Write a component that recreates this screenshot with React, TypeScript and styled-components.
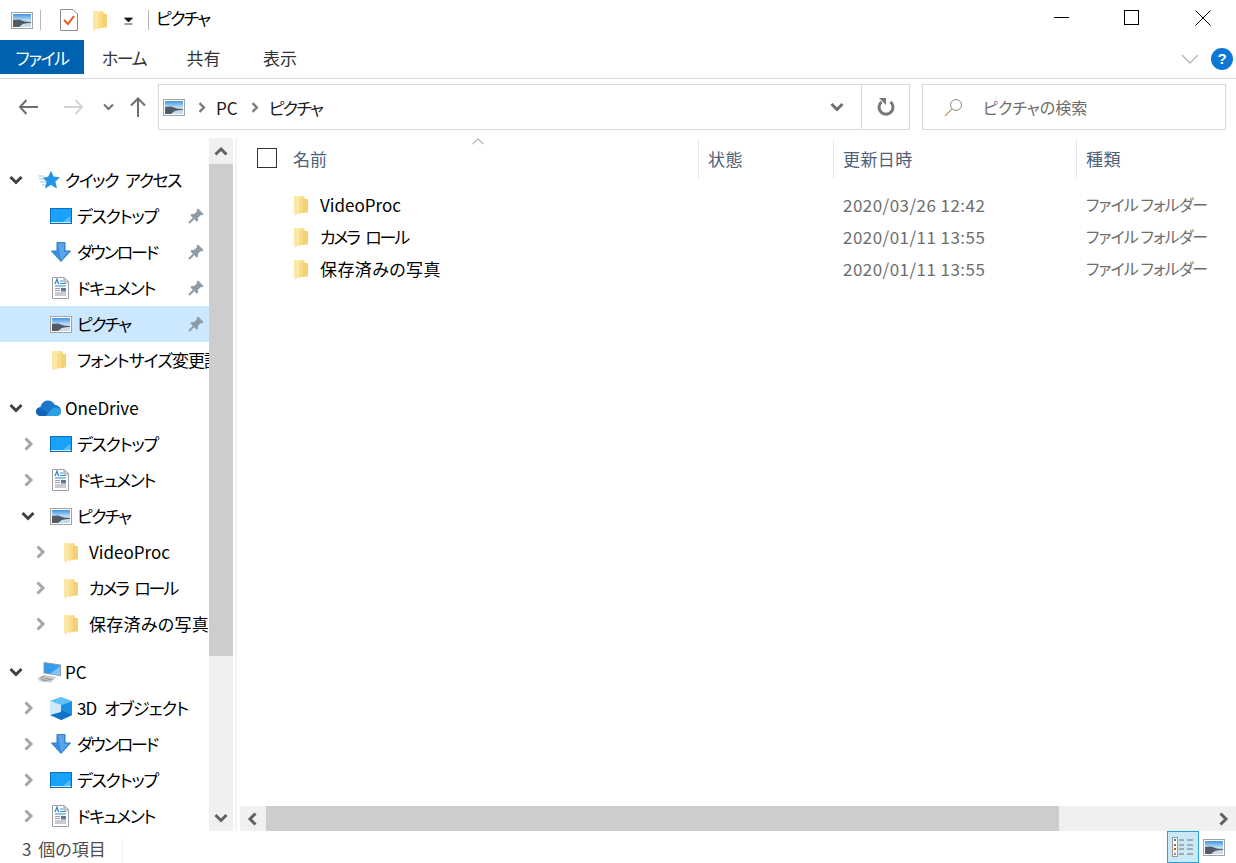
import React from 'react'
import styled, { createGlobalStyle } from 'styled-components'

const GlobalStyle = createGlobalStyle`
  html, body {
    margin: 0;
    padding: 0;
    background: #fff;
  }
  body {
    font-family: 'Noto Sans CJK JP', 'Noto Sans', sans-serif;
    font-size: 17px;
    font-feature-settings: 'palt';
    color: #000;
  }
`

const PictureIcon = ({ size = 22 }: { size?: number }) => (
  <svg width={size} height={(size * 17) / 22} viewBox="0 0 22 17">
    <defs>
      <linearGradient id="picSky" x1="0" y1="0" x2="0" y2="1">
        <stop offset="0" stopColor="#3f94e6" />
        <stop offset="0.55" stopColor="#cfe6f7" />
      </linearGradient>
    </defs>
    <rect x="0.5" y="0.5" width="21" height="16" fill="#fff" stroke="#a3a3a3" />
    <rect x="2" y="2" width="18" height="13" fill="url(#picSky)" />
    <path d="M2 8 L8 7.5 L14 9.5 L20 10 L20 11 L12 12 L8 15 L2 15Z" fill="#515c66" />
    <path d="M9 15 L12 12 L20 11 V15Z" fill="#c8dcea" />
  </svg>
)

const FolderIcon = () => (
  <svg width="17" height="21" viewBox="0 0 17 21">
    <path d="M1 1 H10 L11 4 H14 V17 H5 V1Z" fill="#f7d774" />
    <path d="M0 1 H9 V3 L12 5 V18 H5 L1 21 L0 18Z" fill="#fbe7a6" />
    <path d="M5 4 L9 1.5 V17 L5 19.5Z" fill="#f8dc88" />
    <path d="M9 4 H14 V17.5 H7 L9 16Z" fill="#f4d273" />
  </svg>
)

const DesktopIcon = () => (
  <svg width="22" height="16" viewBox="0 0 22 16">
    <rect x="0.5" y="0.5" width="21" height="15" fill="#18a2fb" stroke="#0a6fb8" />
    <path d="M13 14 L20 8 V14Z" fill="#5cbcf9" />
    <rect x="1" y="14" width="20" height="1" fill="#d6eefd" />
  </svg>
)

const DownloadIcon = () => (
  <svg width="20" height="20" viewBox="0 0 20 20">
    <path d="M6 0.5 H14 V9 H19.5 L10 19.5 L0.5 9 H6Z" fill="#3b8ee0" stroke="#2f7ecb" />
    <path d="M7 1 H13 V10 H17 L10 18Z" fill="#5aa5e8" />
  </svg>
)

const DocIcon = () => (
  <svg width="17" height="22" viewBox="0 0 17 22">
    <path d="M0.5 0.5 H12 L16.5 5 V21.5 H0.5Z" fill="#fff" stroke="#a0a0a0" />
    <path d="M12 0.5 V5 H16.5Z" fill="#e6e6e6" stroke="#a0a0a0" />
    <path d="M3 7 L5 2 L6.5 7" fill="none" stroke="#2b7fd0" strokeWidth="1.2" />
    <path d="M8 4 H11 M8 6.5 H14 M3 9 H14" stroke="#2b8fe0" />
    <path d="M3 11.5 H8 M3 13.5 H8 M3 16 H14 M3 18 H14" stroke="#9a9a9a" />
    <rect x="9" y="11" width="5" height="3.5" fill="#5a7a98" />
  </svg>
)

const PinIcon = () => (
  <svg width="16" height="16" viewBox="0 0 16 16">
    <path d="M10 0.5 L15.5 6 L14 7.5 L12.8 7 L10 9.8 L10 12.5 L8.8 13.7 L2.3 7.2 L3.5 6 L6.2 6 L9 3.2 L8.5 2Z" fill="#8f9ba4" />
    <path d="M5.5 10.5 L1 15" stroke="#8f9ba4" strokeWidth="2" />
  </svg>
)

const StarIcon = () => (
  <svg width="22" height="18" viewBox="0 0 22 18">
    <path d="M13 0.5 L15.5 6 L21.5 6.5 L17 10.5 L18.5 17 L13 13.5 L7.5 17 L9 10.5 L5 7 L10.5 6Z" fill="#1e96ec" stroke="#1b7fd0" strokeWidth="0.6" />
    <path d="M0 5 H6 M1 8 H7 M2 11 H8 M4 14 H8" stroke="#8fcdf5" />
  </svg>
)

const CloudIcon = () => (
  <svg width="25" height="16" viewBox="0 0 25 16">
    <path d="M5 16 C1.5 16 0 13.5 0 11.5 C0 9 2 7.3 4.3 7.2 C5.5 3 8.5 0.5 12 0.5 C15 0.5 17.5 2.2 18.8 5 C22 5 25 7.5 25 11 C25 14 23 16 20 16Z" fill="#1b78c9" />
    <path d="M5 16 C1.5 16 0 13.5 0 11.5 C0 9.5 1.5 8 3.5 7.5 L12 13 L16 16Z" fill="#0f65b8" />
    <path d="M10 16 L16 9 C18 7 25 7.5 25 11 C25 14 23 16 20 16Z" fill="#2aa0e6" />
  </svg>
)

const PcIcon = () => (
  <svg width="24" height="21" viewBox="0 0 24 21">
    <path d="M7 0.5 L23.5 3 V13.5 L7 11Z" fill="#2f9cf0" stroke="#8b9aa5" />
    <path d="M13 12 L23 4 V13Z" fill="#7cc5f7" />
    <path d="M0.5 16 L7.5 13 L19 15 L14 20.5 L3 19.5Z" fill="#c9cdd0" />
    <path d="M3 16 L8 14 M4 17.5 L12 16 M6 19 L15 17" stroke="#8e9499" />
  </svg>
)

const CubeIcon = () => (
  <svg width="22" height="23" viewBox="0 0 22 23">
    <path d="M11 0 L22 4 V18 L11 23 L0 18 V4Z" fill="#b6e2fa" />
    <path d="M11 8 L22 4 V18 L11 23Z" fill="#1b8ee6" />
    <path d="M11 0 L22 4 L11 8 L0 4Z" fill="#62c0f5" />
    <path d="M11 13 L22 18 L11 23 L0 18Z" fill="#1272c8" />
    <path d="M0 4 L11 8 V15 L0 18Z" fill="#cdebfb" />
  </svg>
)

const Chevron = ({ dir, color, size = 14 }: { dir: 'up' | 'down' | 'left' | 'right'; color: string; size?: number }) => {
  const paths = {
    up: 'M1.5 10.5 L7 5 L12.5 10.5',
    down: 'M1.5 4 L7 9.5 L12.5 4',
    left: 'M9.5 1.5 L4 7 L9.5 12.5',
    right: 'M4.5 1.5 L10 7 L4.5 12.5',
  }
  return (
    <svg width={size} height={size} viewBox="0 0 14 14">
      <path d={paths[dir]} fill="none" stroke={color} strokeWidth="3" />
    </svg>
  )
}

const Window = styled.div`
  width: 1236px;
  height: 863px;
  display: flex;
  flex-direction: column;
  overflow: hidden;
  background: #fff;
`

const TitleBar = styled.div`
  height: 40px;
  display: flex;
  align-items: center;
  flex: none;
`

const QuickTools = styled.div`
  display: flex;
  align-items: center;
  padding-left: 11px;
`

const ToolSep = styled.div<{ $before: number; $after: number }>`
  width: 1px;
  height: 20px;
  background: #b5b5b5;
  margin: 0 ${(p) => p.$after}px 0 ${(p) => p.$before}px;
`

const ToolSlot = styled.div<{ $w: number }>`
  width: ${(p) => p.$w}px;
  display: flex;
  justify-content: flex-start;
`

const WindowTitle = styled.div`
  font-size: 17px;
  letter-spacing: -1.7px;
  margin-left: 7px;
  position: relative;
  top: -3px;
`

const WindowButtons = styled.div`
  margin-left: auto;
  margin-right: -2px;
  display: flex;
  align-items: center;
`

const WindowButton = styled.div`
  width: 71px;
  height: 36px;
  display: flex;
  align-items: center;
  justify-content: center;
  position: relative;
  top: -2px;
`

const Ribbon = styled.div`
  height: 38px;
  flex: none;
  display: flex;
  align-items: flex-start;
  border-bottom: 1px solid #d9d9d9;
`

const RibbonTab = styled.div<{ $active?: boolean; $w: number; $track?: number }>`
  width: ${(p) => p.$w}px;
  height: 34px;
  line-height: 36px;
  font-size: 17px;
  letter-spacing: ${(p) => p.$track ?? 0}px;
  text-align: center;
  color: ${(p) => (p.$active ? '#fff' : '#333')};
  background: ${(p) => (p.$active ? '#0063b1' : 'transparent')};
`

const RibbonRight = styled.div`
  margin-left: auto;
  display: flex;
  align-items: center;
  gap: 12px;
  padding: 8px 3px 0 0;
`

const HelpBadge = styled.div`
  width: 22px;
  height: 22px;
  border-radius: 50%;
  background: #0a78d4;
  color: #fff;
  font-family: 'Liberation Sans', sans-serif;
  font-weight: 700;
  font-size: 15px;
  line-height: 22px;
  text-align: center;
`

const AddressRow = styled.div`
  height: 56px;
  flex: none;
  display: flex;
  align-items: flex-start;
  padding-top: 5px;
  box-sizing: border-box;
`

const NavButtons = styled.div`
  width: 158px;
  height: 46px;
  flex: none;
  display: flex;
  align-items: center;
  padding-left: 18px;
  box-sizing: border-box;
`

const NavBtn = styled.div<{ $w: number }>`
  width: ${(p) => p.$w}px;
  flex: none;
  display: flex;
  align-items: center;
`

const AddressBox = styled.div`
  width: 752px;
  height: 46px;
  box-sizing: border-box;
  border: 1px solid #d9d9d9;
  display: flex;
  align-items: center;
  padding-left: 4px;
  font-size: 17px;
  color: #1a1a1a;
`

const Crumb = styled.span`
  margin: 0 9px 0 11px;
  display: inline-flex;
`

const AddressLabel = styled.span<{ $track?: number }>`
  letter-spacing: ${(p) => p.$track ?? 0}px;
`

const AddressEnd = styled.div`
  margin-left: auto;
  display: flex;
  align-items: center;
  height: 100%;
`

const AddressDrop = styled.div`
  width: 46px;
  height: 100%;
  display: flex;
  align-items: center;
  justify-content: center;
  border-right: 1px solid #d9d9d9;
  box-sizing: border-box;
  padding-right: 3px;
`

const RefreshBtn = styled.div`
  width: 47px;
  display: flex;
  justify-content: center;
`

const SearchBox = styled.div`
  width: 304px;
  height: 46px;
  margin-left: 12px;
  box-sizing: border-box;
  border: 1px solid #d9d9d9;
  display: flex;
  align-items: center;
  gap: 20px;
  padding-left: 21px;
  font-size: 16px;
  color: #6d6d6d;
`

const Main = styled.div`
  flex: none;
  height: 696px;
  display: flex;
`

const NavColumn = styled.div`
  width: 209px;
  flex: none;
  overflow: hidden;
  padding-top: 27px;
  box-sizing: border-box;
`

const NavGroup = styled.div`
  margin-bottom: 12px;
`

const NavRow = styled.div<{ $level: number; $selected?: boolean }>`
  height: 36px;
  display: flex;
  align-items: center;
  padding-left: ${(p) => p.$level * 12}px;
  padding-right: 5px;
  overflow: hidden;
  background: ${(p) => (p.$selected ? '#cce8ff' : 'transparent')};
`

const Expander = styled.div`
  width: 32px;
  flex: none;
  display: flex;
  justify-content: center;
`

const NavIcon = styled.div`
  width: 33px;
  flex: none;
  display: flex;
  justify-content: center;
  align-items: center;
`

const NavLabel = styled.span<{ $track?: number }>`
  white-space: nowrap;
  flex: none;
  font-size: 17px;
  letter-spacing: ${(p) => p.$track ?? 0}px;
  word-spacing: 5px;
  position: relative;
  top: -1px;
`

const NavPin = styled.div`
  margin-left: auto;
  display: flex;
`

const VScroll = styled.div`
  width: 24px;
  flex: none;
  margin-top: 3px;
  display: flex;
  flex-direction: column;
  background: #f0f0f0;
`

const ScrollEnd = styled.div<{ $end?: boolean }>`
  height: 26px;
  flex: none;
  margin-top: ${(p) => (p.$end ? 'auto' : '0')};
  display: flex;
  align-items: center;
  justify-content: center;
`

const VThumb = styled.div`
  height: 492px;
  flex: none;
  background: #cdcdcd;
`

const Splitter = styled.div`
  width: 2px;
  flex: none;
  margin: 3px 0 0 2px;
  background: #f2f2f2;
`

const Content = styled.div`
  flex: 1;
  min-width: 0;
  display: flex;
  flex-direction: column;
  padding-left: 1px;
`

const Columns = `
  display: grid;
  grid-template-columns: 461px 135px 243px 157px;
`

const HeaderRow = styled.div`
  ${Columns}
  height: 38px;
  margin-top: 5px;
  margin-bottom: 11px;
  flex: none;
  position: relative;
`

const SortCaret = styled.div`
  position: absolute;
  left: 234px;
  top: -2px;
  display: flex;
`

const HeaderCell = styled.div<{ $last?: boolean }>`
  padding-left: 9px;
  border-right: ${(p) => (p.$last ? '0' : '1px solid #e5e5e5')};
  font-size: 17px;
  letter-spacing: 0.4px;
  line-height: 37px;
  color: #4c607a;
`

const NameHeader = styled(HeaderCell)`
  display: flex;
  align-items: flex-start;
  padding-left: 19px;
  gap: 16px;
  letter-spacing: 0;
`

const CheckBox = styled.div`
  width: 20px;
  height: 20px;
  box-sizing: border-box;
  border: 1px solid #333;
  margin-top: 8px;
  flex: none;
`

const FileList = styled.div`
  flex: 1;
  min-height: 0;
`

const FileRow = styled.div`
  ${Columns}
  height: 32px;
  align-items: center;
`

const NameCell = styled.div`
  display: flex;
  align-items: center;
  gap: 9px;
  padding-left: 56px;
  font-size: 17px;
`

const NameText = styled.span<{ $track?: number }>`
  letter-spacing: ${(p) => p.$track ?? 0}px;
  word-spacing: 5px;
  position: relative;
  top: -1px;
`

const DateCell = styled.div`
  padding-left: 9px;
  font-size: 17px;
  letter-spacing: 0.45px;
  color: #6d6d6d;
  white-space: nowrap;
  position: relative;
  top: -1px;
`

const TypeCell = styled.div`
  padding-left: 9px;
  font-size: 16px;
  letter-spacing: -0.9px;
  color: #6d6d6d;
  white-space: nowrap;
  position: relative;
  top: -1px;
`

const HScroll = styled.div`
  height: 25px;
  flex: none;
  margin-left: 2px;
  display: flex;
  background: #f0f0f0;
`

const HEnd = styled.div<{ $end?: boolean }>`
  width: 26px;
  flex: none;
  margin-left: ${(p) => (p.$end ? 'auto' : '0')};
  display: flex;
  align-items: center;
  justify-content: center;
`

const HThumb = styled.div`
  width: 793px;
  flex: none;
  background: #cdcdcd;
`

const StatusBar = styled.div`
  flex: 1;
  display: flex;
  align-items: center;
  font-size: 17px;
  color: #4d4d4d;
`

const StatusText = styled.div`
  padding-left: 22px;
  width: 100px;
  flex: none;
  white-space: nowrap;
  word-spacing: 3px;
  position: relative;
  top: 1px;
`

const StatusSep = styled.div`
  width: 1px;
  height: 24px;
  margin-top: 8px;
  background: #efefef;
`

const ViewToggles = styled.div`
  margin-left: auto;
  display: flex;
  align-items: center;
  padding-right: 11px;
  gap: 4px;
  height: 100%;
`

const DetailsToggle = styled.div`
  width: 32px;
  height: 100%;
  box-sizing: border-box;
  border: 1px solid #26a0da;
  background: #cbe8f6;
  display: flex;
  align-items: center;
  justify-content: center;
`

const nav = [
  {
    rows: [
      { level: 0, exp: 'open', icon: <StarIcon />, label: 'クイック アクセス', track: -1.5 },
      { level: 1, icon: <DesktopIcon />, label: 'デスクトップ', track: -1.3, pin: true },
      { level: 1, icon: <DownloadIcon />, label: 'ダウンロード', track: -2.1, pin: true },
      { level: 1, icon: <DocIcon />, label: 'ドキュメント', track: -1.5, pin: true },
      { level: 1, icon: <PictureIcon />, label: 'ピクチャ', track: -1.7, pin: true, selected: true },
      { level: 1, icon: <FolderIcon />, label: 'フォントサイズ変更記事', track: -1 },
    ],
  },
  {
    rows: [
      { level: 0, exp: 'open', icon: <CloudIcon />, label: 'OneDrive' },
      { level: 1, exp: 'closed', icon: <DesktopIcon />, label: 'デスクトップ', track: -1.3 },
      { level: 1, exp: 'closed', icon: <DocIcon />, label: 'ドキュメント', track: -1.5 },
      { level: 1, exp: 'open', icon: <PictureIcon />, label: 'ピクチャ', track: -1.7 },
      { level: 2, exp: 'closed', icon: <FolderIcon />, label: 'VideoProc' },
      { level: 2, exp: 'closed', icon: <FolderIcon />, label: 'カメラ ロール', track: -2.2 },
      { level: 2, exp: 'closed', icon: <FolderIcon />, label: '保存済みの写真', track: 0.3 },
    ],
  },
  {
    rows: [
      { level: 0, exp: 'open', icon: <PcIcon />, label: 'PC' },
      { level: 1, exp: 'closed', icon: <CubeIcon />, label: '3D オブジェクト', track: -0.9 },
      { level: 1, exp: 'closed', icon: <DownloadIcon />, label: 'ダウンロード', track: -2.1 },
      { level: 1, exp: 'closed', icon: <DesktopIcon />, label: 'デスクトップ', track: -1.3 },
      { level: 1, exp: 'closed', icon: <DocIcon />, label: 'ドキュメント', track: -1.5 },
    ],
  },
]

const files = [
  { name: 'VideoProc', date: '2020/03/26 12:42', track: 0 },
  { name: 'カメラ ロール', date: '2020/01/11 13:55', track: -2.2 },
  { name: '保存済みの写真', date: '2020/01/11 13:55', track: 0.4 },
]

export default function App() {
  return (
    <Window>
      <GlobalStyle />
      <TitleBar>
        <QuickTools>
          <PictureIcon />
          <ToolSep $before={7} $after={19} />
          <ToolSlot $w={33}>
            <svg width="18" height="22" viewBox="0 0 18 22">
              <path d="M0.5 0.5 H13 L17.5 5 V21.5 H0.5Z" fill="#fff" stroke="#8c8c8c" />
              <path d="M4 11 L8 15 L14 7" fill="none" stroke="#e8591c" strokeWidth="2" />
            </svg>
          </ToolSlot>
          <ToolSlot $w={30}>
            <FolderIcon />
          </ToolSlot>
          <svg width="11" height="10" viewBox="0 0 11 10">
            <path d="M1.5 3 H9.5 L5.5 7Z M1.5 9 H9.5" fill="#111" stroke="#111" strokeWidth="0.8" />
          </svg>
          <ToolSep $before={14} $after={0} />
          <WindowTitle>ピクチャ</WindowTitle>
        </QuickTools>
        <WindowButtons>
          <WindowButton>
            <svg width="16" height="16" viewBox="0 0 16 16">
              <path d="M1 7.5 H16" stroke="#000" />
            </svg>
          </WindowButton>
          <WindowButton>
            <svg width="16" height="16" viewBox="0 0 16 16">
              <rect x="0.5" y="0.5" width="14" height="14" fill="none" stroke="#000" />
            </svg>
          </WindowButton>
          <WindowButton>
            <svg width="16" height="16" viewBox="0 0 16 16">
              <path d="M0.5 0.5 L15.5 15.5 M15.5 0.5 L0.5 15.5" stroke="#000" />
            </svg>
          </WindowButton>
        </WindowButtons>
      </TitleBar>

      <Ribbon>
        <RibbonTab $active $w={84} $track={-1.5}>ファイル</RibbonTab>
        <RibbonTab $w={80} $track={-1.5}>ホーム</RibbonTab>
        <RibbonTab $w={79}>共有</RibbonTab>
        <RibbonTab $w={74}>表示</RibbonTab>
        <RibbonRight>
          <svg width="18" height="12" viewBox="0 0 18 12">
            <path d="M1 2 L9 10 L17 2" fill="none" stroke="#b9b9b9" strokeWidth="1.4" />
          </svg>
          <HelpBadge>?</HelpBadge>
        </RibbonRight>
      </Ribbon>

      <AddressRow>
        <NavButtons>
          <NavBtn $w={46}>
            <svg width="20" height="16" viewBox="0 0 20 16">
              <path d="M8.5 1 L2 8 L8.5 15 M2 8 H20" fill="none" stroke="#6f6f6f" strokeWidth="2" />
            </svg>
          </NavBtn>
          <NavBtn $w={39}>
            <svg width="20" height="16" viewBox="0 0 20 16">
              <path d="M11.5 1 L18 8 L11.5 15 M18 8 H0" fill="none" stroke="#d4d4d4" strokeWidth="2" />
            </svg>
          </NavBtn>
          <NavBtn $w={27}>
            <svg width="11" height="8" viewBox="0 0 11 8">
              <path d="M1 1.5 L5.5 6 L10 1.5" fill="none" stroke="#707070" strokeWidth="2" />
            </svg>
          </NavBtn>
          <NavBtn $w={20}>
            <svg width="16" height="20" viewBox="0 0 16 20">
              <path d="M1 8.5 L8 1.5 L15 8.5 M8 1.5 V20" fill="none" stroke="#6f6f6f" strokeWidth="2" />
            </svg>
          </NavBtn>
        </NavButtons>
        <AddressBox>
          <PictureIcon />
          <Crumb>
            <Chevron dir="right" color="#7a7a7a" size={11} />
          </Crumb>
          <AddressLabel>PC</AddressLabel>
          <Crumb>
            <Chevron dir="right" color="#7a7a7a" size={11} />
          </Crumb>
          <AddressLabel $track={-1.7}>ピクチャ</AddressLabel>
          <AddressEnd>
            <AddressDrop>
              <Chevron dir="down" color="#6f6f6f" />
            </AddressDrop>
            <RefreshBtn>
              <svg width="18" height="18" viewBox="0 0 18 18">
                <path d="M13.5 3.8 A7 7 0 1 1 4.5 3.8" fill="none" stroke="#777" strokeWidth="3" />
                <path d="M2 0 H9 V7Z" fill="#777" />
              </svg>
            </RefreshBtn>
          </AddressEnd>
        </AddressBox>
        <SearchBox>
          <svg width="19" height="19" viewBox="0 0 19 19">
            <circle cx="12" cy="7" r="5.5" fill="none" stroke="#8a8a8a" />
            <path d="M8 11 L1 18" stroke="#c09a70" strokeWidth="1.2" />
          </svg>
          ピクチャの検索
        </SearchBox>
      </AddressRow>

      <Main>
        <NavColumn>
          {nav.map((group, i) => (
            <NavGroup key={i}>
              {group.rows.map((row, j) => (
                <NavRow key={j} $level={row.level} $selected={row.selected}>
                  <Expander>
                    {row.exp === 'open' && <Chevron dir="down" color="#404040" />}
                    {row.exp === 'closed' && <Chevron dir="right" color="#a6a6a6" />}
                  </Expander>
                  <NavIcon>{row.icon}</NavIcon>
                  <NavLabel $track={row.track}>{row.label}</NavLabel>
                  {row.pin && (
                    <NavPin>
                      <PinIcon />
                    </NavPin>
                  )}
                </NavRow>
              ))}
            </NavGroup>
          ))}
        </NavColumn>
        <VScroll>
          <ScrollEnd>
            <Chevron dir="up" color="#606060" />
          </ScrollEnd>
          <VThumb />
          <ScrollEnd $end>
            <Chevron dir="down" color="#606060" />
          </ScrollEnd>
        </VScroll>
        <Splitter />
        <Content>
          <HeaderRow>
            <NameHeader>
              <CheckBox />
              名前
            </NameHeader>
            <HeaderCell>状態</HeaderCell>
            <HeaderCell>更新日時</HeaderCell>
            <HeaderCell $last>種類</HeaderCell>
            <SortCaret>
              <svg width="12" height="7" viewBox="0 0 12 7">
                <path d="M0.5 6 L6 0.8 L11.5 6" fill="none" stroke="#8a8a8a" />
              </svg>
            </SortCaret>
          </HeaderRow>
          <FileList>
            {files.map((file) => (
              <FileRow key={file.name}>
                <NameCell>
                  <FolderIcon />
                  <NameText $track={file.track}>{file.name}</NameText>
                </NameCell>
                <div />
                <DateCell>{file.date}</DateCell>
                <TypeCell>ファイル フォルダー</TypeCell>
              </FileRow>
            ))}
          </FileList>
          <HScroll>
            <HEnd>
              <Chevron dir="left" color="#606060" />
            </HEnd>
            <HThumb />
            <HEnd $end>
              <Chevron dir="right" color="#606060" />
            </HEnd>
          </HScroll>
        </Content>
      </Main>

      <StatusBar>
        <StatusText>3 個の項目</StatusText>
        <StatusSep />
        <ViewToggles>
          <DetailsToggle>
            <svg width="22" height="20" viewBox="0 0 22 20">
              <rect x="0.5" y="0.5" width="5" height="19" fill="#fff" stroke="#999" />
              <rect x="2" y="2" width="2" height="2" fill="#3a7ec0" />
              <rect x="2" y="7" width="2" height="2" fill="#a86a30" />
              <rect x="2" y="11" width="2" height="2" fill="#c04a10" />
              <rect x="2" y="16" width="2" height="2" fill="#a08070" />
              <path d="M7 3 H12 M15 3 H21 M7 8 H12 M15 8 H21 M7 12 H12 M15 12 H21 M7 17 H12 M15 17 H21" stroke="#707070" />
            </svg>
          </DetailsToggle>
          <PictureIcon />
        </ViewToggles>
      </StatusBar>
    </Window>
  )
}
